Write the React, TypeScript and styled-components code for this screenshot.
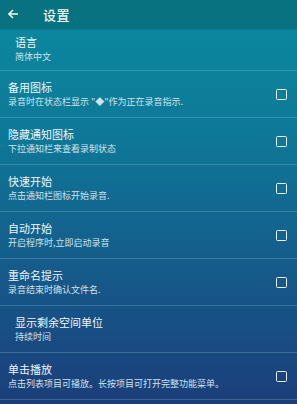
import React from 'react'
import styled, { createGlobalStyle } from 'styled-components'

const Global = createGlobalStyle`
  html, body {
    margin: 0;
    padding: 0;
    background: #1b3f7a;
  }
  body {
    font-family: "Noto Sans CJK SC", "Noto Sans", sans-serif;
  }
`

const Screen = styled.div`
  width: 297px;
  height: 404px;
  overflow: hidden;
  display: flex;
  flex-direction: column;
  background: linear-gradient(180deg, #0a8ba0 0%, #0e7797 35%, #155c8b 65%, #1b3e7a 100%);
`

const Toolbar = styled.header`
  height: 28px;
  flex: none;
  display: flex;
  align-items: center;
  background: #087281;
  box-shadow: 0 1px 2px rgba(0, 40, 50, 0.35);
  color: #eef6f7;
`

const Back = styled.span`
  width: 43px;
  display: flex;
  align-items: center;
  padding-left: 8px;
  box-sizing: border-box;
`

const Title = styled.h1`
  margin: 0;
  font-size: 13px;
  font-weight: 500;
  letter-spacing: 0.5px;
`

const List = styled.ul`
  list-style: none;
  margin: 0;
  padding: 0;
`

const Row = styled.li<{ $first?: boolean; $indent?: boolean }>`
  height: ${(p) => (p.$first ? 42 : 46)}px;
  display: flex;
  align-items: center;
  justify-content: space-between;
  padding: 0 10px 0 ${(p) => (p.$indent ? 15 : 8)}px;
  border-bottom: 1px solid rgba(190, 230, 240, 0.22);
`

const Texts = styled.div`
  display: flex;
  flex-direction: column;
  gap: 1px;
`

const Label = styled.span`
  font-size: 11px;
  line-height: 14px;
  color: #f0f6f8;
`

const Sub = styled.span`
  font-size: 9px;
  line-height: 13px;
  color: #cfe2ea;
`

const Box = styled.span`
  width: 9px;
  height: 9px;
  border: 1.5px solid #e8f2f5;
  border-radius: 1.5px;
  flex: none;
`

type Item = { title: string; sub: string; check?: boolean }

const items: Item[] = [
  { title: '语言', sub: '简体中文' },
  { title: '备用图标', sub: '录音时在状态栏显示 "◆"作为正在录音指示.', check: true },
  { title: '隐藏通知图标', sub: '下拉通知栏来查看录制状态', check: true },
  { title: '快速开始', sub: '点击通知栏图标开始录音.', check: true },
  { title: '自动开始', sub: '开启程序时,立即启动录音', check: true },
  { title: '重命名提示', sub: '录音结束时确认文件名.', check: true },
  { title: '显示剩余空间单位', sub: '持续时间' },
  { title: '单击播放', sub: '点击列表项目可播放。长按项目可打开完整功能菜单。', check: true },
]

const App: React.FC = () => (
  <Screen>
    <Global />
    <Toolbar>
      <Back>
        <svg width="11" height="10" viewBox="0 0 11 10">
          <path d="M10 5H1.5M5 1L1 5l4 4" fill="none" stroke="#eef6f7" strokeWidth="1.6" />
        </svg>
      </Back>
      <Title>设置</Title>
    </Toolbar>
    <List>
      {items.map((it, i) => (
        <Row key={it.title} $first={i === 0} $indent={!it.check}>
          <Texts>
            <Label>{it.title}</Label>
            <Sub>{it.sub}</Sub>
          </Texts>
          {it.check && <Box />}
        </Row>
      ))}
    </List>
  </Screen>
)

export default App
